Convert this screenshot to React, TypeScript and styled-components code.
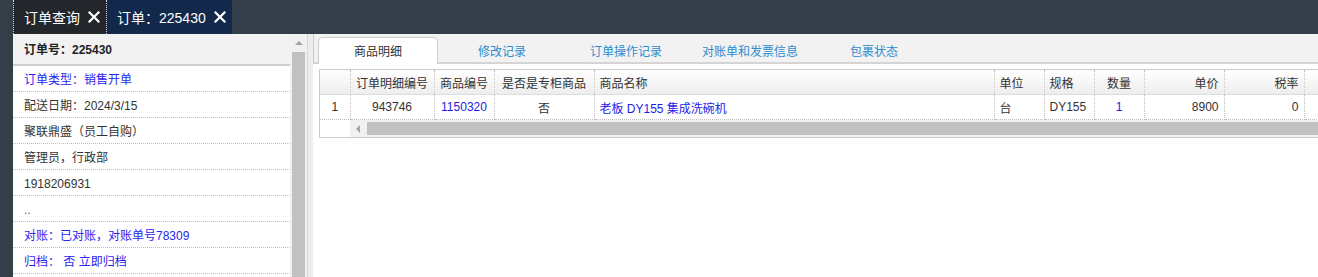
import React from 'react';
import styled, { createGlobalStyle } from 'styled-components';

const GlobalStyle = createGlobalStyle`
  html, body {
    margin: 0;
    padding: 0;
    background: #ffffff;
    overflow: hidden;
  }
  body {
    font-family: 'Liberation Sans', 'Noto Sans CJK SC', sans-serif;
    font-size: 12px;
    color: #333333;
  }
`;

const FONT = `'Liberation Sans', 'Noto Sans CJK SC', sans-serif`;

interface InfoRow {
  text: string;
  blue?: boolean;
  faint?: boolean;
}

const infoRows: InfoRow[] = [
  { text: '订单类型：销售开单', blue: true },
  { text: '配送日期：2024/3/15' },
  { text: '聚联鼎盛（员工自购）' },
  { text: '管理员，行政部' },
  { text: '1918206931' },
  { text: '..', faint: true },
  { text: '对账：已对账，对账单号78309', blue: true },
  { text: '归档： 否 立即归档', blue: true },
];

const detailTabs = ['商品明细', '修改记录', '订单操作记录', '对账单和发票信息', '包裹状态'];

type Align = 'left' | 'center' | 'right';

interface Column {
  title: string;
  width: number;
  align: Align;
}

const columns: Column[] = [
  { title: '', width: 30, align: 'center' },
  { title: '订单明细编号', width: 84, align: 'center' },
  { title: '商品编号', width: 60, align: 'center' },
  { title: '是否是专柜商品', width: 100, align: 'center' },
  { title: '商品名称', width: 400, align: 'left' },
  { title: '单位', width: 50, align: 'left' },
  { title: '规格', width: 50, align: 'left' },
  { title: '数量', width: 50, align: 'center' },
  { title: '单价', width: 80, align: 'right' },
  { title: '税率', width: 80, align: 'right' },
  { title: '', width: 120, align: 'left' },
];

const row: { value: string; link?: boolean }[] = [
  { value: '1' },
  { value: '943746' },
  { value: '1150320', link: true },
  { value: '否' },
  { value: '老板 DY155 集成洗碗机', link: true },
  { value: '台' },
  { value: 'DY155' },
  { value: '1', link: true },
  { value: '8900' },
  { value: '0' },
  { value: '' },
];

function CloseIcon() {
  return (
    <svg width='12' height='12' viewBox='0 0 12 12'>
      <path d='M1.5 1.5 L10.5 10.5 M10.5 1.5 L1.5 10.5' stroke='#ffffff' strokeWidth='2.2' strokeLinecap='square' />
    </svg>
  );
}

export default function App() {
  return (
    <>
      <GlobalStyle />
      <Page>
        <TopBar>
          <TopSpacer />
          <PageTab $active={false}>
            <span>订单查询</span>
            <CloseIcon />
          </PageTab>
          <PageTab $active>
            <span>订单：225430</span>
            <CloseIcon />
          </PageTab>
        </TopBar>
        <Body>
          <SideStrip />
          <LeftPanel>
            <InfoList>
              <InfoHeader>订单号：225430</InfoHeader>
              {infoRows.map((r, i) => (
                <InfoItem key={i} $blue={r.blue} $faint={r.faint}>
                  {r.text}
                </InfoItem>
              ))}
            </InfoList>
            <VScroll>
              <ScrollArrowUp />
              <VThumb />
            </VScroll>
          </LeftPanel>
          <Splitter />
          <RightPanel>
            <TabStrip>
              {detailTabs.map((t, i) => (
                <DetailTab key={t} $active={i === 0}>
                  {t}
                </DetailTab>
              ))}
            </TabStrip>
            <GridArea>
              <GridBox>
                <Table>
                  <colgroup>
                    {columns.map((c, i) => (
                      <col key={i} style={{ width: c.width }} />
                    ))}
                  </colgroup>
                  <thead>
                    <tr>
                      {columns.map((c, i) => (
                        <HeadCell key={i} $align={c.align}>
                          {c.title}
                        </HeadCell>
                      ))}
                    </tr>
                  </thead>
                  <tbody>
                    <tr>
                      {row.map((cell, i) => (
                        <DataCell key={i} $align={columns[i].align} $link={cell.link}>
                          {cell.value}
                        </DataCell>
                      ))}
                    </tr>
                  </tbody>
                </Table>
                <HScrollRow>
                  <HScrollGutter />
                  <HScroll>
                    <ScrollArrowLeft />
                    <HThumb />
                  </HScroll>
                </HScrollRow>
              </GridBox>
            </GridArea>
          </RightPanel>
        </Body>
      </Page>
    </>
  );
}

const Page = styled.div`
  width: 1318px;
  height: 277px;
  display: flex;
  flex-direction: column;
  overflow: hidden;
  font-family: ${FONT};
`;

const TopBar = styled.div`
  height: 34px;
  flex: none;
  display: flex;
  background: #343e48;
`;

const TopSpacer = styled.div`
  width: 13px;
`;

const PageTab = styled.div<{ $active: boolean }>`
  display: flex;
  align-items: center;
  gap: 8px;
  padding: 0 6px 0 10px;
  background: ${({ $active }) => ($active ? '#13294b' : '#23272c')};
  color: #ffffff;
  font-size: 14px;
  line-height: 34px;
  border-left: ${({ $active }) => ($active ? 'none' : '1px dotted #d8d8d8')};
  border-right: ${({ $active }) => ($active ? 'none' : '1px dotted #d8d8d8')};
  span {
    padding-top: 1px;
  }
`;

const Body = styled.div`
  flex: 1;
  display: flex;
  min-height: 0;
`;

const SideStrip = styled.div`
  width: 13px;
  flex: none;
  background: #343e48;
`;

const LeftPanel = styled.div`
  width: 294px;
  flex: none;
  display: flex;
  background: #ffffff;
`;

const InfoList = styled.div`
  width: 277px;
  display: flex;
  flex-direction: column;
`;

const InfoHeader = styled.div`
  height: 28px;
  line-height: 28px;
  padding: 2px 0 0 11px;
  background: #f2f2f2;
  border-bottom: 2px solid #cfcfcf;
  font-weight: bold;
  font-size: 12px;
  color: #222222;
`;

const InfoItem = styled.div<{ $blue?: boolean; $faint?: boolean }>`
  height: 21px;
  line-height: 21px;
  padding: 4px 0 0 11px;
  border-bottom: 1px dotted #bdbdbd;
  font-size: 12px;
  color: ${({ $blue, $faint }) => ($blue ? '#2b24ef' : $faint ? '#666666' : '#333333')};
  white-space: nowrap;
`;

const VScroll = styled.div`
  width: 17px;
  display: flex;
  flex-direction: column;
  align-items: center;
  background: #f1f1f1;
`;

const ScrollArrowUp = styled.div`
  margin-top: 7px;
  width: 0;
  height: 0;
  border-left: 4px solid transparent;
  border-right: 4px solid transparent;
  border-bottom: 4px solid #a3a3a3;
`;

const VThumb = styled.div`
  margin-top: 7px;
  width: 13px;
  flex: 1;
  background: #c1c1c1;
`;

const Splitter = styled.div`
  width: 5px;
  flex: none;
  border-left: 1px solid #d6d6d6;
  background: #ededed;
`;

const RightPanel = styled.div`
  flex: 1;
  min-width: 0;
  display: flex;
  flex-direction: column;
  overflow: hidden;
  background: #ffffff;
`;

const TabStrip = styled.div`
  height: 25px;
  flex: none;
  display: flex;
  align-items: flex-end;
  gap: 4px;
  padding: 3px 0 0 4px;
  background: #f2f2f2;
  border-left: 1px solid #cccccc;
  border-bottom: 2px solid #d4d4d4;
`;

const DetailTab = styled.div<{ $active: boolean }>`
  width: 120px;
  height: ${({ $active }) => ($active ? '27px' : '25px')};
  margin-bottom: ${({ $active }) => ($active ? '-2px' : '0')};
  box-sizing: border-box;
  display: flex;
  align-items: center;
  justify-content: center;
  padding-bottom: ${({ $active }) => ($active ? '2px' : '0')};
  font-size: 12px;
  color: ${({ $active }) => ($active ? '#333333' : '#2d8bcf')};
  background: ${({ $active }) => ($active ? '#ffffff' : 'transparent')};
  border: 1px solid ${({ $active }) => ($active ? '#cccccc' : 'transparent')};
  border-bottom: none;
  border-radius: 5px 5px 0 0;
`;

const GridArea = styled.div`
  padding: 5px 0 0 6px;
`;

const GridBox = styled.div`
  width: 1140px;
  border: 1px solid #cccccc;
  border-right: none;
`;

const Table = styled.table`
  border-collapse: collapse;
  table-layout: fixed;
  width: 1104px;
  font-size: 12px;
`;

const HeadCell = styled.th<{ $align: Align }>`
  height: 24px;
  padding: 0 5px;
  font-weight: normal;
  color: #333333;
  text-align: ${({ $align }) => $align};
  white-space: nowrap;
  overflow: hidden;
  background: linear-gradient(#ffffff, #ededed);
  border-right: 1px dotted #bdbdbd;
  border-bottom: 1px solid #dddddd;
`;

const DataCell = styled.td<{ $align: Align; $link?: boolean }>`
  height: 24px;
  padding: 0 5px;
  color: ${({ $link }) => ($link ? '#1d1de8' : '#333333')};
  text-align: ${({ $align }) => $align};
  white-space: nowrap;
  overflow: hidden;
  border-right: 1px dotted #bdbdbd;
  border-bottom: 1px dotted #bdbdbd;
`;

const HScrollRow = styled.div`
  display: flex;
  height: 17px;
`;

const HScrollGutter = styled.div`
  width: 30px;
  flex: none;
`;

const HScroll = styled.div`
  flex: 1;
  display: flex;
  align-items: center;
  background: #f1f1f1;
`;

const ScrollArrowLeft = styled.div`
  margin-left: 6px;
  width: 0;
  height: 0;
  border-top: 4px solid transparent;
  border-bottom: 4px solid transparent;
  border-right: 4px solid #a3a3a3;
`;

const HThumb = styled.div`
  margin-left: 7px;
  flex: 1;
  height: 13px;
  background: #c1c1c1;
`;
